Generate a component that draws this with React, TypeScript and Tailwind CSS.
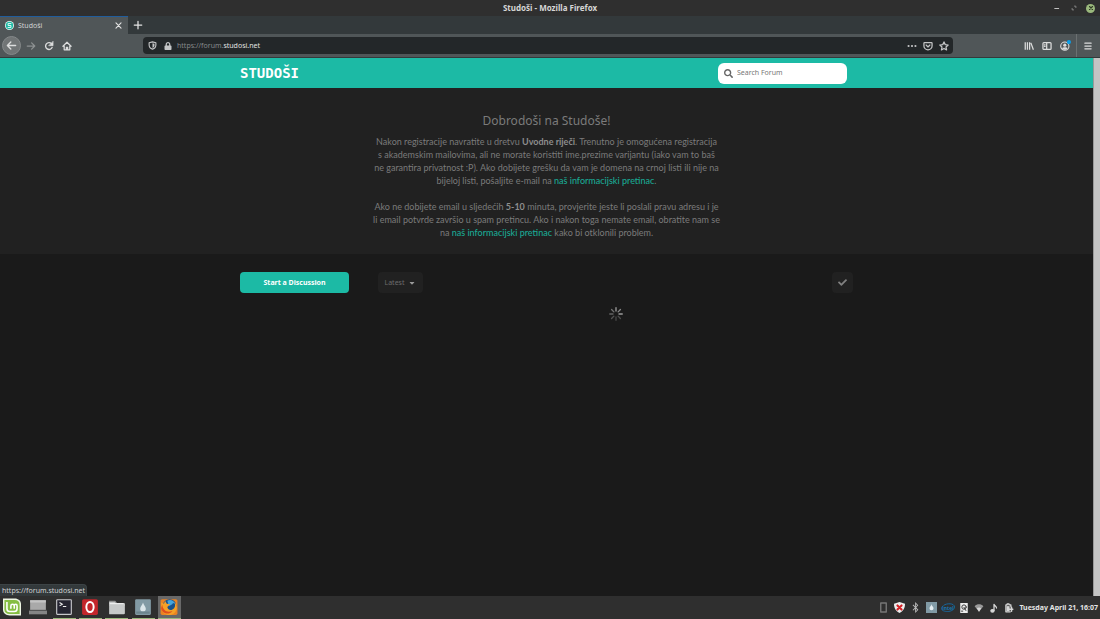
import React from "react";
import { FaSearch, FaCheck, FaCaretDown, FaBluetoothB, FaLock } from "react-icons/fa";

type IconProps = { children: React.ReactNode; className?: string; box?: string };

function Icon({ children, className = "size-[10px]", box = "0 0 16 16" }: IconProps) {
  return (
    <svg
      viewBox={box}
      className={className}
      fill="none"
      stroke="currentColor"
      strokeWidth="2"
      strokeLinecap="round"
      strokeLinejoin="round"
      aria-hidden="true"
    >
      {children}
    </svg>
  );
}

function IconButton({ label, className = "", children }: { label: string; className?: string; children: React.ReactNode }) {
  return (
    <button type="button" aria-label={label} className={`flex shrink-0 items-center justify-center ${className}`}>
      {children}
    </button>
  );
}

function TitleBar() {
  return (
    <div className="grid h-4 grid-cols-[1fr_auto_1fr] items-center bg-[#2f2f2f] text-[#d6d6d6]">
      <span />
      <h1 className="text-[8px] leading-4 font-bold">Studoši - Mozilla Firefox</h1>
      <div className="flex items-center justify-end gap-2 pr-[5px]">
        <IconButton label="Minimize" className="size-[9px]">
          <Icon className="size-[7px]"><path d="M4 8h9" /></Icon>
        </IconButton>
        <IconButton label="Restore" className="size-[9px] text-[#999]">
          <Icon className="size-[6px]"><path d="M9 3h4v4M3 9v4h4" /></Icon>
        </IconButton>
        <IconButton label="Close window" className="size-[9px] rounded-full bg-[#9ab87c] text-[#2f3a24]">
          <Icon className="size-[6px]"><path strokeWidth="3" d="M4 4l8 8M12 4l-8 8" /></Icon>
        </IconButton>
      </div>
    </div>
  );
}

function TabStrip() {
  return (
    <div className="flex h-[18px] items-stretch bg-[#33393b] text-[#e4e4e4]">
      <div className="flex w-32 items-center border-t border-[#215d9c] bg-[#505658] pr-[5px] pl-[5px]">
        <Icon className="size-[9px]">
          <circle cx="8" cy="8" r="8" fill="#e9f7f4" stroke="none" />
          <circle cx="8" cy="8" r="6.5" fill="#1cbaa5" stroke="none" />
          <path stroke="#fff" strokeWidth="1.5" d="M10.5 4.5h-5V8h5v3.500h-5" />
        </Icon>
        <span className="ml-1 flex-1 text-[7px] leading-4 text-[#d0d2d3]">Studoši</span>
        <IconButton label="Close tab" className="size-[9px]">
          <Icon className="size-[9px]"><path d="M3.500 3.500l9 9M12.500 3.500l-9 9" /></Icon>
        </IconButton>
      </div>
      <IconButton label="New tab" className="w-5">
        <Icon className="size-[10px]"><path d="M8 2v12M2 8h12" /></Icon>
      </IconButton>
    </div>
  );
}

function NavBar() {
  return (
    <div className="flex h-6 items-center border-b border-[#34393b] bg-[#505658] text-[#dcdddd]">
      <div className="flex w-[143px] shrink-0 items-center pl-[2px]">
        <IconButton label="Back" className="size-[19px] rounded-full border border-[#85898a] bg-[#717576]">
          <Icon className="size-[11px]"><path d="M14 8H2.500M7 3L2 8l5 5" /></Icon>
        </IconButton>
        <IconButton label="Forward" className="size-[19px] text-[#8d9192]">
          <Icon><path d="M2 8h11.500M9 3l5 5-5 5" /></Icon>
        </IconButton>
        <IconButton label="Reload" className="size-[18px]">
          <Icon><path strokeWidth="2.200" d="M13 10.500A5.500 5.500 0 1 1 12 4.200" /><path fill="currentColor" strokeWidth="1" d="M14.500 1v6.500H8z" /></Icon>
        </IconButton>
        <IconButton label="Home" className="size-[18px]">
          <Icon><path d="M1.500 8.500L8 2l6.500 6.500M3.500 8v6h9V8M7 14v-4h2v4" /></Icon>
        </IconButton>
      </div>
      <div className="flex h-[17px] min-w-0 flex-1 items-center rounded-sm bg-[#232729] px-1 text-[#c4c5c6]">
        <IconButton label="Tracking protection" className="size-[10px]">
          <Icon className="size-[9px]"><path d="M8 1.500l6 1.500v4c0 4-3 6.500-6 7.500-3-1-6-3.500-6-7.500V3z" /><path fill="currentColor" stroke="none" d="M8 4l3.500 1v2.500C11.500 10 10 11.500 8 12.500z" /></Icon>
        </IconButton>
        <FaLock className="ml-[7px] size-2 shrink-0" aria-hidden="true" />
        <div className="ml-[5px] flex min-w-0 flex-1 items-center text-[7px] leading-4">
          <label htmlFor="address" className="text-[#85898b]">https://forum.</label>
          <input id="address" defaultValue="studosi.net" className="h-4 min-w-0 flex-1 bg-transparent p-0 leading-4 text-[#e2e3e3] outline-none" />
        </div>
        <div className="flex items-center gap-[6px]">
          <IconButton label="Page actions" className="size-[10px]">
            <Icon><g fill="currentColor" stroke="none"><circle cx="2.500" cy="8" r="1.700" /><circle cx="8" cy="8" r="1.700" /><circle cx="13.500" cy="8" r="1.700" /></g></Icon>
          </IconButton>
          <IconButton label="Save to Pocket" className="size-[10px]">
            <Icon><path d="M2.500 2.500h11a1 1 0 0 1 1 1V8a6.500 6 0 0 1-13 0V3.500a1 1 0 0 1 1-1zM5 6.500l3 3 3-3" /></Icon>
          </IconButton>
          <IconButton label="Bookmark" className="size-[10px]">
            <Icon><path d="M8 1.500l2 4.300 4.700.6-3.500 3.200.9 4.700L8 12l-4.100 2.300.9-4.700L1.300 6.400 6 5.800z" /></Icon>
          </IconButton>
        </div>
      </div>
      <div className="flex w-[147px] shrink-0 items-center justify-end gap-[6px] self-stretch pr-[7px]">
        <div className="flex items-center gap-2">
          <IconButton label="Library" className="size-[10px]">
            <Icon><path strokeLinecap="butt" d="M2 2v12M5.500 2v12M9 2v12M11 3l4 11" /></Icon>
          </IconButton>
          <IconButton label="Sidebar" className="size-[10px]">
            <Icon><rect x="1.500" y="2.500" width="13" height="11" rx="1.500" /><path d="M7.500 3v10M4 6h1M4 8.500h1" /></Icon>
          </IconButton>
          <IconButton label="Account" className="size-[10px]">
            <Icon className="size-[11px] shrink-0">
              <circle cx="7" cy="9" r="6" strokeWidth="1.600" />
              <circle cx="7" cy="7.500" r="2.300" fill="currentColor" stroke="none" />
              <path fill="currentColor" stroke="none" d="M3 12c1-2 7-2 8 0-2 3-6 3-8 0z" />
              <circle cx="13" cy="3" r="3" fill="#0a9ee8" stroke="none" />
            </Icon>
          </IconButton>
        </div>
        <div className="flex items-center self-stretch border-l border-[#6b7071] pl-[6px]">
          <IconButton label="Menu" className="size-[10px]">
            <Icon><path d="M3 3.500h10M3 8h10M3 12.500h10" /></Icon>
          </IconButton>
        </div>
      </div>
    </div>
  );
}

function SiteHeader() {
  return (
    <header className="bg-[#1cbaa5]">
      <div className="mx-auto flex h-[30px] max-w-[613px] items-center justify-between pr-[6px]">
        <a href="/" className="font-['DejaVu_Sans_Mono',monospace] text-[14px] leading-5 font-bold text-white">STUDOŠI</a>
        <div className="flex h-[21px] w-[129px] items-center gap-1 rounded-md bg-white px-[6px] text-[#666]">
          <label htmlFor="search" aria-label="Search Forum">
            <FaSearch className="size-[9px] shrink-0" aria-hidden="true" />
          </label>
          <input id="search" type="search" placeholder="Search Forum" className="h-4 min-w-0 flex-1 bg-transparent p-0 text-[7px] leading-4 outline-none placeholder:text-[#777]" />
        </div>
      </div>
    </header>
  );
}

function PretinacLink() {
  return <a href="#pretinac" className="font-medium text-[#1aa994]">naš informacijski pretinac</a>;
}

function Welcome() {
  return (
    <section className="bg-[#212121] px-4 pt-6 pb-[15px] text-center text-[#7b7b7b]">
      <h2 className="text-[12px] leading-[18px]">Dobrodoši na Studoše!</h2>
      <div className="mt-[5px] space-y-[13px] font-['Lato',sans-serif] text-[9px] leading-[13px]">
        <p>
          Nakon registracije navratite u dretvu <strong className="text-[#8d8d8d]">Uvodne riječi</strong>. Trenutno je omogućena registracija<br />
          s akademskim mailovima, ali ne morate koristiti ime.prezime varijantu (iako vam to baš<br />
          ne garantira privatnost :P). Ako dobijete grešku da vam je domena na crnoj listi ili nije na<br />
          bijeloj listi, pošaljite e-mail na <PretinacLink />.
        </p>
        <p>
          Ako ne dobijete email u sljedećih <strong className="text-[#8d8d8d]">5-10</strong> minuta, provjerite jeste li poslali pravu adresu i je<br />
          li email potvrde završio u spam pretincu. Ako i nakon toga nemate email, obratite nam se<br />
          na <PretinacLink /> kako bi otklonili problem.
        </p>
      </div>
    </section>
  );
}

const SPOKES = [0.85, 0.75, 0.9, 0.35, 0.3, 0.4, 0.5, 0.6];

function Spinner() {
  return (
    <svg viewBox="0 0 28 28" className="size-[14px]" role="img" aria-label="Loading">
      {SPOKES.map((opacity, i) => (
        <line key={i} x1="14" y1="1.500" x2="14" y2="8" stroke="#aaa" strokeWidth="2.800" strokeLinecap="round" opacity={opacity} transform={`rotate(${i * 45} 14 14)`} />
      ))}
    </svg>
  );
}

function Discussions() {
  return (
    <section className="mx-auto flex w-full max-w-[613px] items-start gap-[29px] pt-[18px] text-[#6c6c6c]">
      <aside className="w-[109px] shrink-0">
        <button type="button" className="block h-[21px] w-full rounded-sm bg-[#1cbaa5] text-[7px] leading-4 font-bold text-white">Start a Discussion</button>
      </aside>
      <div className="flex-1">
        <div className="flex items-center justify-between">
          <button type="button" className="flex h-[21px] w-[45px] items-center justify-center gap-1 rounded-sm bg-[#212121] text-[7px] leading-4">
            Latest <FaCaretDown className="size-2 text-[#999]" aria-hidden="true" />
          </button>
          <IconButton label="Mark all as read" className="size-[21px] rounded-sm bg-[#212121] text-[#808080]">
            <FaCheck className="size-[9px]" />
          </IconButton>
        </div>
        <div className="flex justify-center pt-[14px]"><Spinner /></div>
      </div>
    </section>
  );
}

function AppButton({ label, active = "border-transparent", children }: { label: string; active?: string; children: React.ReactNode }) {
  return (
    <button type="button" aria-label={label} className={`flex w-[23px] items-center justify-center border-b ${active}`}>
      <svg viewBox="0 0 32 32" className="size-[18px]" aria-hidden="true">{children}</svg>
    </button>
  );
}

function Taskbar() {
  return (
    <footer className="flex h-[23px] items-stretch justify-between bg-[#2f2f2f]">
      <div className="flex w-[181px] justify-between">
        <AppButton label="Menu">
          <path d="M0 1h21c6 0 11 4 11 10v20H12C5 31 0 27 0 20z" fill="#eef6e4" />
          <path d="M2.500 3.500h18c6 0 9 3 9 8v17H12c-6 0-9.500-3-9.500-8z" fill="#86be43" />
          <path d="M7 7v12c0 3 2 5 5 5h8c3 0 5-2 5-5v-5c0-4-5-4-5 0v5m0-5c0-4-6-4-6 0v5" fill="none" stroke="#fff" strokeWidth="2.800" />
        </AppButton>
        <AppButton label="Show desktop">
          <path d="M2 4h28v18H2z" fill="#a9a9a9" /><path d="M2 4h28v4H2z" fill="#c4c4c4" /><path d="M0 23h32v6H0z" fill="#858585" /><path d="M0 21h32v2H0z" fill="#555" />
        </AppButton>
        <AppButton label="Terminal" active="border-[#9ab87c]">
          <rect x="2" y="2" width="28" height="28" rx="2" fill="#c8c8cc" /><path d="M4 4h24v24H4z" fill="#252431" />
          <path d="M8 8l5 3-5 3M14 15h6" fill="none" stroke="#eee" strokeWidth="2" />
        </AppButton>
        <AppButton label="Opera" active="border-[#9ab87c]">
          <rect x="2" y="2" width="28" height="28" rx="3" fill="#c4262b" />
          <ellipse cx="16" cy="16" rx="6.500" ry="9" fill="none" stroke="#fff" strokeWidth="3.500" />
        </AppButton>
        <AppButton label="Files" active="border-[#9ab87c]">
          <path d="M2 5h11l3 4h14v5H2z" fill="#929292" /><path d="M2 7h10l3 3h15v17a2 2 0 0 1-2 2H3a1 1 0 0 1-1-1z" fill="#c7c9c9" /><path d="M3 10h25" stroke="#f1f1f1" strokeWidth="2" />
        </AppButton>
        <AppButton label="Deluge" active="border-[#9ab87c]">
          <rect x="2" y="2" width="28" height="28" rx="2" fill="#829aa4" /><path d="M16 8c1 5 5 7 5 11a5 5 0 0 1-10 0c0-4 4-6 5-11z" fill="#dce6ea" /><path d="M4 24h24v4H4z" fill="#6d858e" />
        </AppButton>
        <AppButton label="Firefox" active="border-[#9ab87c] bg-[#686868]">
          <rect x="1" y="2" width="30" height="28" rx="3" fill="#ea8323" />
          <circle cx="17" cy="14" r="12" fill="#17518d" />
          <path d="M13 5c5-3 11-1 14 5l-4-1c-1 4-5 3-7 6z" fill="#45a5dc" />
          <path d="M2 8l5 2 2-5 3 5 6 1-5 5c1 6 8 7 12 2 3-4 2-9 0-12 7 7 6 17-1 22-8 5-20 1-21-9z" fill="#f5a126" />
          <path d="M4 12c1 10 9 15 18 11-6 8-18 5-20-5z" fill="#df4f1e" />
        </AppButton>
      </div>
      <div className="flex items-center gap-[5px] pr-[2px] text-[#d8d8d8]">
        <Icon className="size-[11px] text-[#777]"><rect x="4" y="1.500" width="8" height="13" /></Icon>
        <Icon className="size-[11px]"><path fill="#eee" stroke="none" d="M8 0l8 2.500c0 7-3 11-8 13.500C3 13.500 0 9.500 0 2.500z" /><path stroke="#d32126" strokeWidth="3" d="M5 5l6 6M11 5l-6 6" /></Icon>
        <FaBluetoothB className="size-[11px] text-[#bbb]" aria-hidden="true" />
        <Icon className="size-[11px]"><rect width="16" height="16" fill="#819aa5" stroke="none" /><path fill="#e5edf0" stroke="none" d="M8 3c0 3 3 4 3 6a3 3 0 0 1-6 0c0-2 3-3 3-6z" /></Icon>
        <svg viewBox="0 0 28 20" className="-mx-px h-[10px] w-[14px]" role="img" aria-label="Intel">
          <path d="M5 5C11 0 27 0 27 8c0 5-7 9-14 9-6 0-12-2-12-6 0-2 1-4 3-5" fill="none" stroke="#146da9" strokeWidth="1.800" />
          <text x="14" y="13" textAnchor="middle" fontSize="10" fontWeight="700" fontFamily="Noto Sans, sans-serif" fill="#1976b3">intel</text>
        </svg>
        <Icon className="size-[10px] text-[#eee]"><path fill="currentColor" stroke="none" d="M2 0h12v16H2z" /><circle cx="8" cy="6.500" r="3.500" stroke="#333" strokeWidth="1.500" /><path stroke="#333" strokeWidth="1.500" d="M8 7l3 5M4 13h2" /></Icon>
        <Icon className="size-[10px]"><path fill="#999" stroke="none" d="M1 5c4-4 10-4 14 0l-7 9z" /><path fill="currentColor" stroke="none" d="M4.500 8.500c2-2 5-2 7 0L8 14z" /></Icon>
        <Icon className="size-[10px]"><path d="M8 12V2c1 3 4 3 4 6" /><ellipse cx="5.500" cy="12.500" rx="2.500" ry="2" fill="currentColor" /></Icon>
        <Icon className="size-[10px]"><path d="M10 14H3V3h2V1.500h3V3h3v3" /><path fill="currentColor" stroke="none" d="M4 5h5v8H4z" /><path strokeWidth="2.500" d="M8 10h6M12 7v6" /></Icon>
        <time dateTime="2020-04-21T16:07" className="text-[7px] leading-4 font-bold whitespace-nowrap text-[#e4e4e4]">Tuesday April 21, 16:07</time>
      </div>
    </footer>
  );
}

export default function App() {
  return (
    <div className="flex min-h-screen flex-col bg-[#1a1a1a] font-['Noto_Sans',sans-serif]">
      <TitleBar />
      <TabStrip />
      <NavBar />
      <div className="flex flex-1 items-stretch">
        <div className="flex min-w-0 flex-1 flex-col">
          <SiteHeader />
          <main className="flex-1">
            <Welcome />
            <Discussions />
          </main>
          <div className="self-start rounded-tr-sm border-t border-r border-[#3c4345] bg-[#33393b] pr-px pl-[2px] text-[7px] leading-[11px] text-[#d0d2d3]">
            https://forum.studosi.net
          </div>
        </div>
        <div className="w-[7px] shrink-0 border-l border-[#999] bg-[#c4c4c4]" />
      </div>
      <Taskbar />
    </div>
  );
}
